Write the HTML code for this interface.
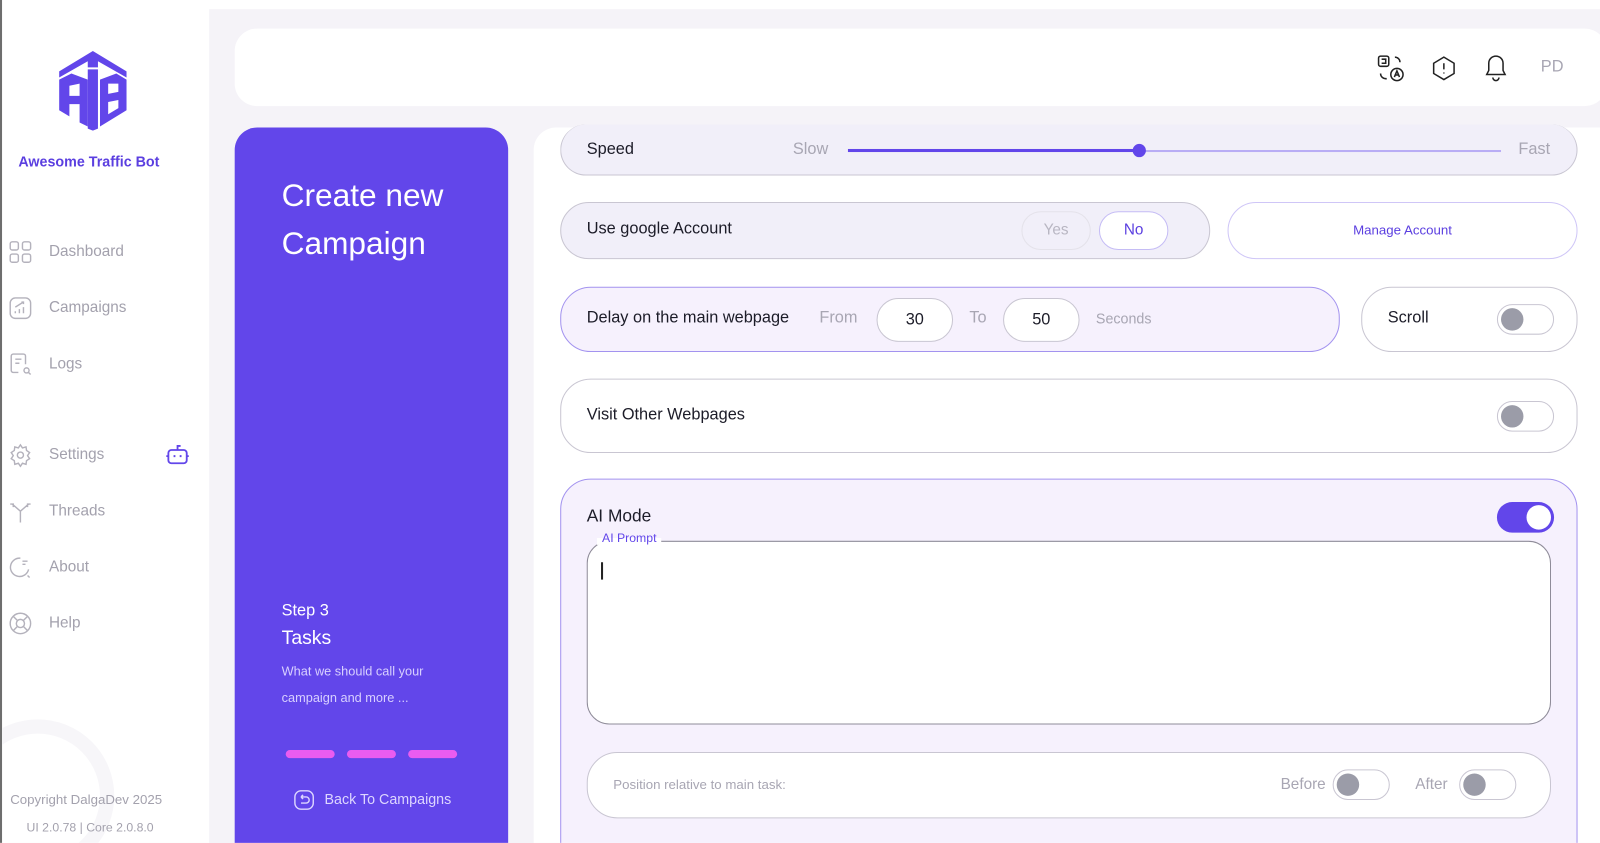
<!DOCTYPE html>
<html><head><meta charset="utf-8"><style>
*{box-sizing:border-box;margin:0;padding:0}
body{width:1600px;height:842px;overflow:hidden;background:#f5f3f8;font-family:"Liberation Sans",sans-serif;color:#1c1c28}
#w{position:absolute;left:0;top:0;width:1568px;height:826px;transform:scale(1.0204);transform-origin:0 0;overflow:hidden}
.abs{position:absolute}
.side{left:0;top:0;width:205px;height:842px;background:#fff;border-left:2px solid #6e6e6e;overflow:hidden}
.nav{left:46px;font-size:15px;color:#a3a1ad}
.ico{left:6px;width:24px;height:24px}
.pill{position:absolute;border-radius:30px}
.tog{position:absolute;width:56px;height:30px;border-radius:15px;border:1.5px solid #c9c6d2;background:#fff}
.tog i{position:absolute;left:3px;top:3px;width:22px;height:22px;border-radius:50%;background:#9b9ca8}
</style></head><body><div id="w">
<div class="abs" style="left:0;top:0;width:1600px;height:9px;background:#fff"></div>
<div class="abs side">
  <svg class="abs" style="left:54px;top:50px" width="70" height="78" viewBox="0 0 70 78"><g fill="#6246ea"><path d="M35 0 L68 20 L68 26 L40 10 L40 16 L30 16 L30 10 L2 26 L2 20Z"/><path d="M2 28 L14 22 L30 28 L30 74 L22 70 L22 52 L12 52 L12 64 L2 58Z M12 34 L12 44 L22 44 L22 32Z" fill-rule="evenodd"/><path d="M30 18 L40 18 L40 76 L35 78 L30 76Z"/><path d="M42 28 L58 22 L68 28 L68 58 L42 74Z M50 32 L50 42 L60 40 L60 32Z M50 50 L50 62 L60 56 L60 48Z" fill-rule="evenodd"/></g></svg>
  <div class="abs" style="left:16px;top:150px;font-size:14px;font-weight:bold;color:#5b3fe0">Awesome Traffic Bot</div>
  <div class="abs" style="left:-40px;top:705px;width:150px;height:150px;border-radius:50%;border:14px solid #f7f6f9"></div>
  <svg class="abs ico" style="top:235px" viewBox="0 0 24 24" fill="none" stroke="#b4b2bc" stroke-width="1.4"><rect x="2" y="2" width="8" height="8" rx="2"/><rect x="14" y="2" width="8" height="8" rx="2"/><rect x="2" y="14" width="8" height="8" rx="2"/><rect x="14" y="14" width="8" height="8" rx="2"/></svg>
  <div class="abs nav" style="top:238px">Dashboard</div>
  <svg class="abs ico" style="top:290px" viewBox="0 0 24 24" fill="none" stroke="#b4b2bc" stroke-width="1.4"><rect x="2" y="2" width="20" height="20" rx="5"/><path d="M7 17v-2M11 17v-4M15 17v-6M7 11l8-5M13 6h2v2"/></svg>
  <div class="abs nav" style="top:293px">Campaigns</div>
  <svg class="abs ico" style="top:345px" viewBox="0 0 24 24" fill="none" stroke="#b4b2bc" stroke-width="1.4"><path d="M10 20H5a2 2 0 0 1-2-2V4a2 2 0 0 1 2-2h10a2 2 0 0 1 2 2v8M7 7h6M7 11h4"/><circle cx="18" cy="18" r="2.5"/><path d="M20 20l2 2"/></svg>
  <div class="abs nav" style="top:348px">Logs</div>
  <svg class="abs ico" style="top:434px" viewBox="0 0 24 24" fill="none" stroke="#b4b2bc" stroke-width="1.4"><circle cx="12" cy="12" r="3"/><path d="M12 2l2 3 3.5-1 .5 3.5 3 2-2 3 2 3-3 2-.5 3.5-3.5-1-2 3-2-3-3.5 1-.5-3.5-3-2 2-3-2-3 3-2 .5-3.5 3.5 1z"/></svg>
  <div class="abs nav" style="top:437px">Settings</div>
  <svg class="abs" style="left:160px;top:434px" width="24" height="24" viewBox="0 0 24 24" fill="none" stroke="#6246ea" stroke-width="1.8"><rect x="3" y="7" width="18" height="13" rx="3"/><path d="M12 7V3h3M9 12v2M15 12v2M1 13h2M21 13h2"/></svg>
  <svg class="abs ico" style="top:489px" viewBox="0 0 24 24" fill="none" stroke="#b4b2bc" stroke-width="1.4"><path d="M12 23V12L4 5M12 12l8-7M2 5h3v3M22 5h-3v3"/></svg>
  <div class="abs nav" style="top:492px">Threads</div>
  <svg class="abs ico" style="top:544px" viewBox="0 0 24 24" fill="none" stroke="#b4b2bc" stroke-width="1.4"><path d="M20 14A9 9 0 1 1 12 3M14 6h5M14 9h3M19 20l2 2"/></svg>
  <div class="abs nav" style="top:547px">About</div>
  <svg class="abs ico" style="top:599px" viewBox="0 0 24 24" fill="none" stroke="#b4b2bc" stroke-width="1.4"><circle cx="12" cy="12" r="10"/><circle cx="12" cy="12" r="4"/><path d="M5 5l4 4M19 5l-4 4M5 19l4-4M19 19l-4-4"/></svg>
  <div class="abs nav" style="top:602px">Help</div>
  <div class="abs" style="left:8px;top:776px;font-size:13px;color:#a3a1ad">Copyright DalgaDev 2025</div>
  <div class="abs" style="left:24px;top:804px;font-size:12px;color:#a3a1ad">UI 2.0.78 | Core 2.0.8.0</div>
</div>
<div class="abs" style="left:230px;top:28px;width:1345px;height:76px;background:#fff;border-radius:22px"></div>
<svg class="abs" style="left:1350px;top:54px" width="26" height="26" viewBox="0 0 26 26" fill="none" stroke="#222" stroke-width="1.5"><rect x="1" y="1" width="10" height="10" rx="2"/><path d="M4 4h4v4H4M17 2a5 5 0 0 1 5 5M9 23a5 5 0 0 1-6-5"/><circle cx="19" cy="19" r="6"/><path d="M16.5 21.5l2.5-6 2.5 6M17.5 19.5h3"/></svg>
<svg class="abs" style="left:1402px;top:54px" width="26" height="26" viewBox="0 0 26 26" fill="none" stroke="#222" stroke-width="1.5"><path d="M13 2l10 6v10l-10 6-10-6V8z"/><path d="M13 8v6M13 17v1"/></svg>
<svg class="abs" style="left:1453px;top:53px" width="26" height="28" viewBox="0 0 26 28" fill="none" stroke="#222" stroke-width="1.5"><path d="M13 2a7 7 0 0 1 7 7v7l2 4H4l2-4V9a7 7 0 0 1 7-7zM10 23a3 3 0 0 0 6 0"/></svg>
<div class="abs" style="left:1510px;top:57px;font-size:16px;color:#a8a6b3">PD</div>

<div class="abs" style="left:230px;top:125px;width:268px;height:730px;background:#6246ea;border-radius:22px"></div>
<div class="abs" style="left:276px;top:168px;font-size:31px;line-height:47px;color:#fff">Create new<br>Campaign</div>
<div class="abs" style="left:276px;top:590px;font-size:16px;color:#fff">Step 3</div>
<div class="abs" style="left:276px;top:615px;font-size:19px;color:#fff">Tasks</div>
<div class="abs" style="left:276px;top:645px;font-size:12.5px;line-height:26px;color:#d8d0ff">What we should call your<br>campaign and more ...</div>
<div class="abs" style="left:280px;top:735px;width:48px;height:8px;border-radius:4px;background:#ea5cf0"></div>
<div class="abs" style="left:340px;top:735px;width:48px;height:8px;border-radius:4px;background:#ea5cf0"></div>
<div class="abs" style="left:400px;top:735px;width:48px;height:8px;border-radius:4px;background:#ea5cf0"></div>
<svg class="abs" style="left:287px;top:773px" width="22" height="22" viewBox="0 0 22 22" fill="none" stroke="#ddd6ff" stroke-width="1.4"><rect x="2" y="2" width="18" height="18" rx="6"/><path d="M8 8h5a3 3 0 0 1 0 6H8M8 8l2-2M8 8l2 2"/></svg>
<div class="abs" style="left:318px;top:775px;font-size:14px;color:#ddd6ff">Back To Campaigns</div>

<div class="abs" style="left:523px;top:125px;width:1060px;height:730px;background:#fff;border-radius:22px 0 0 0"></div>
<div class="pill" style="left:549px;top:122px;width:997px;height:50px;background:#f1eff9;border:1px solid #c9c6d2;border-top:none"></div>
<div class="abs" style="left:575px;top:138px;font-size:16px">Speed</div>
<div class="abs" style="left:777px;top:138px;font-size:16px;color:#a8a6b3">Slow</div>
<div class="abs" style="left:831px;top:146px;width:285px;height:3px;background:#6246ea"></div>
<div class="abs" style="left:1116px;top:147px;width:355px;height:2px;background:#b9adf5"></div>
<div class="abs" style="left:1110px;top:141px;width:13px;height:13px;border-radius:50%;background:#6246ea"></div>
<div class="abs" style="left:1488px;top:138px;font-size:16px;color:#a8a6b3">Fast</div>
<div class="pill" style="left:549px;top:198px;width:637px;height:56px;background:#f1eff9;border:1px solid #c9c6d2"></div>
<div class="abs" style="left:575px;top:216px;font-size:16px">Use google Account</div>
<div class="pill" style="left:1001px;top:207px;width:68px;height:38px;border:1px solid #e4e2ea;color:#b8b6c2;font-size:15px;text-align:center;line-height:36px">Yes</div>
<div class="pill" style="left:1077px;top:207px;width:68px;height:38px;border:1px solid #c5bcf5;background:#fff;color:#5b3fe0;font-size:15px;text-align:center;line-height:36px">No</div>
<div class="pill" style="left:1203px;top:198px;width:343px;height:56px;border:1px solid #cfc6f7;background:#fff;color:#5b3fe0;font-size:13px;text-align:center;line-height:54px">Manage Account</div>
<div class="pill" style="left:549px;top:281px;width:764px;height:64px;background:#f6f1fd;border:1px solid #a393ef"></div>
<div class="abs" style="left:575px;top:303px;font-size:16px">Delay on the main webpage</div>
<div class="abs" style="left:803px;top:303px;font-size:16px;color:#a8a6b3">From</div>
<div class="pill" style="left:859px;top:292px;width:75px;height:43px;background:#fff;border:1px solid #c9c6d2;text-align:center;line-height:41px;font-size:16px">30</div>
<div class="abs" style="left:950px;top:303px;font-size:16px;color:#a8a6b3">To</div>
<div class="pill" style="left:983px;top:292px;width:75px;height:43px;background:#fff;border:1px solid #c9c6d2;text-align:center;line-height:41px;font-size:16px">50</div>
<div class="abs" style="left:1074px;top:304px;font-size:14px;color:#a8a6b3">Seconds</div>
<div class="pill" style="left:1334px;top:281px;width:212px;height:64px;background:#fff;border:1px solid #c9c6d2"></div>
<div class="abs" style="left:1360px;top:303px;font-size:16px">Scroll</div>
<div class="tog" style="left:1467px;top:298px"><i></i></div>
<div class="pill" style="left:549px;top:371px;width:997px;height:73px;background:#fff;border:1px solid #c9c6d2"></div>
<div class="abs" style="left:575px;top:398px;font-size:16px">Visit Other Webpages</div>
<div class="tog" style="left:1467px;top:393px"><i></i></div>
<div class="abs" style="left:549px;top:469px;width:997px;height:400px;background:#f6f1fd;border:1px solid #a393ef;border-radius:30px"></div>
<div class="abs" style="left:575px;top:496px;font-size:17px">AI Mode</div>
<div class="abs" style="left:1467px;top:492px;width:56px;height:30px;border-radius:15px;background:#6246ea"><i style="position:absolute;right:3px;top:3px;width:24px;height:24px;border-radius:50%;background:#fff"></i></div>
<div class="abs" style="left:575px;top:530px;width:945px;height:180px;background:#fff;border:1.5px solid #8f8c99;border-radius:22px"></div>
<div class="abs" style="left:585px;top:520px;padding:0 5px;background:linear-gradient(#f6f1fd 50%,#fff 50%);font-size:12px;color:#6246ea">AI Prompt</div>
<div class="abs" style="left:589px;top:551px;width:2px;height:17px;background:#222"></div>
<div class="pill" style="left:575px;top:737px;width:945px;height:65px;background:#fff;border:1px solid #c9c6d2"></div>
<div class="abs" style="left:601px;top:761px;font-size:13px;color:#a8a6b3">Position relative to main task:</div>
<div class="abs" style="left:1255px;top:760px;font-size:15px;color:#a8a6b3">Before</div>
<div class="tog" style="left:1306px;top:754px"><i></i></div>
<div class="abs" style="left:1387px;top:760px;font-size:15px;color:#a8a6b3">After</div>
<div class="tog" style="left:1430px;top:754px"><i></i></div>
</div></body></html>
